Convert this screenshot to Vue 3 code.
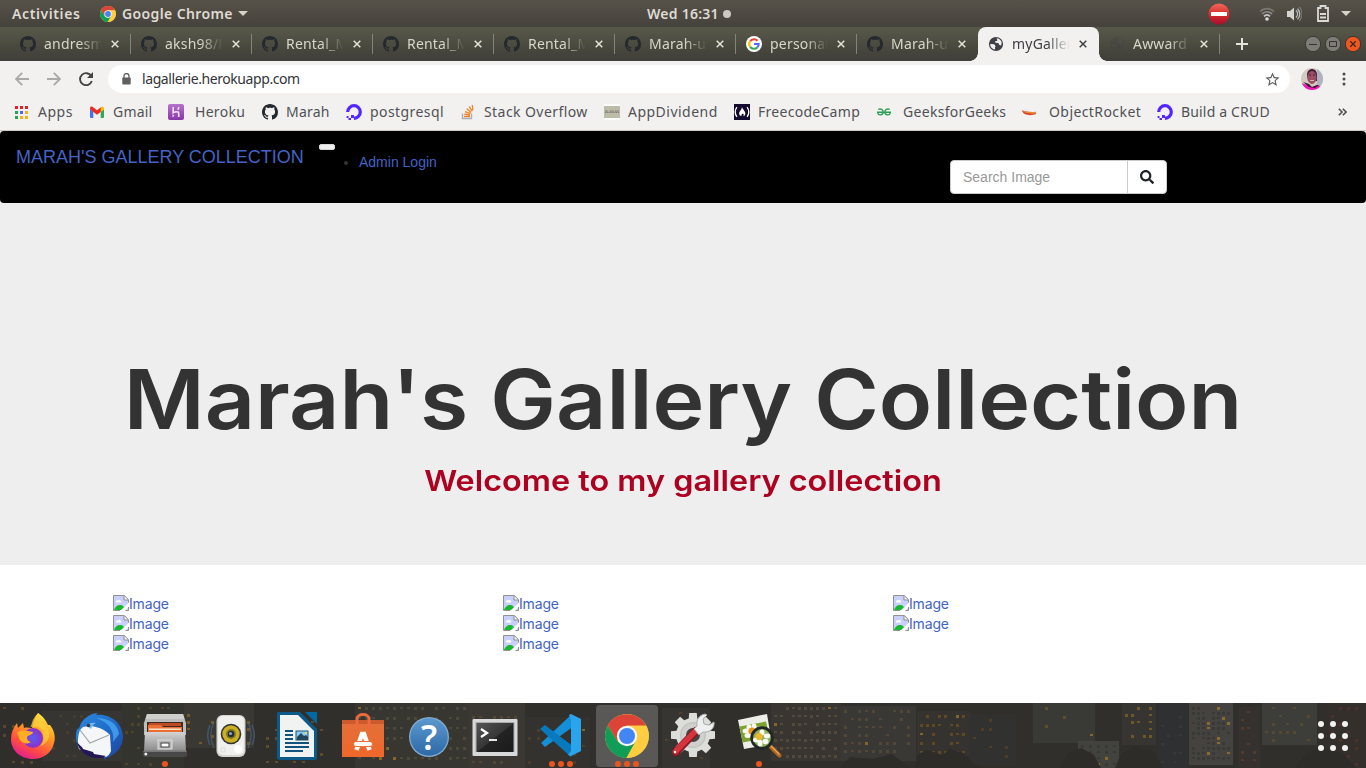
<script setup>
const tabs = [
  { icon: 'github', title: 'andresmoran' },
  { icon: 'github', title: 'aksh98/Rental' },
  { icon: 'github', title: 'Rental_Mgmt' },
  { icon: 'github', title: 'Rental_Mgmt' },
  { icon: 'github', title: 'Rental_Mgmt' },
  { icon: 'github', title: 'Marah-uwase' },
  { icon: 'google', title: 'personal gallery' },
  { icon: 'github', title: 'Marah-uwase' },
  { icon: 'globe', title: 'myGallery', active: true },
  { icon: 'globe', title: 'Awward', dim: true },
]
const bookmarks = [
  { icon: 'apps', label: 'Apps', cls: 'b-apps' },
  { icon: 'gmail', label: 'Gmail', cls: 'b-gmail' },
  { icon: 'heroku', label: 'Heroku', cls: 'b-heroku' },
  { icon: 'github', label: 'Marah', cls: 'b-marah' },
  { icon: 'ocean', label: 'postgresql', cls: 'b-pg' },
  { icon: 'stack', label: 'Stack Overflow', cls: 'b-so' },
  { icon: 'dividend', label: 'AppDividend', cls: 'b-ad' },
  { icon: 'fcc', label: 'FreecodeCamp', cls: 'b-fcc' },
  { icon: 'geeks', label: 'GeeksforGeeks', cls: 'b-gfg' },
  { icon: 'rocket', label: 'ObjectRocket', cls: 'b-or' },
  { icon: 'ocean', label: 'Build a CRUD', cls: 'b-crud' },
]
const columns = [3, 3, 2]
const dock = [
  { icon: 'firefox', dots: 0 },
  { icon: 'thunderbird', dots: 0 },
  { icon: 'files', dots: 1 },
  { icon: 'rhythmbox', dots: 0 },
  { icon: 'writer', dots: 0 },
  { icon: 'software', dots: 0 },
  { icon: 'help', dots: 0 },
  { icon: 'terminal', dots: 0 },
  { icon: 'vscode', dots: 3 },
  { icon: 'chrome', dots: 3, active: true },
  { icon: 'settings', dots: 0 },
  { icon: 'viewer', dots: 1 },
]

// Night skyline behind the dock: building blocks with rows of windows.
const blocks = [
  { x: 0, y: 0, w: 42, h: 65, f: '#302e2b', c: '#67512f', dx: 9, dy: 9, p: 0.35 },
  { x: 42, y: 8, w: 80, h: 50, f: '#363532', c: '#53452c', dx: 7, dy: 8, p: 0.35 },
  { x: 122, y: 0, w: 62, h: 65, f: '#34342f', c: '#5c4a2e', dx: 6, dy: 8, p: 0.3 },
  { x: 184, y: 0, w: 70, h: 45, f: '#3a3833', c: '#8c6729', dx: 6, dy: 7, p: 0.35 },
  { x: 254, y: 14, w: 76, h: 51, f: '#302f2c', c: '#735528', dx: 9, dy: 8, p: 0.3 },
  { x: 355, y: 0, w: 114, h: 65, f: '#383631', c: '#55503f', dx: 7, dy: 10, p: 0.8 },
  { x: 469, y: 0, w: 56, h: 65, f: '#3b3834', c: '#5c4d36', dx: 7, dy: 9, p: 0.4 },
  { x: 525, y: 14, w: 65, h: 51, f: '#34322e', c: '#594326', dx: 9, dy: 8, p: 0.25 },
  { x: 662, y: 5, w: 48, h: 60, f: '#373532', c: '#5d4727', dx: 7, dy: 9, p: 0.35 },
  { x: 771, y: 0, w: 70, h: 58, f: '#393631', c: '#5d5346', dx: 6, dy: 8, p: 0.75 },
  { x: 841, y: 3, w: 75, h: 55, f: '#3a3834', c: '#5a4e3c', dx: 7, dy: 8, p: 0.65 },
  { x: 917, y: 8, w: 53, h: 45, f: '#353330', c: '#75511f', dx: 6, dy: 9, p: 0.75 },
  { x: 970, y: 12, w: 46, h: 50, f: '#31312f', c: '#5b4220', dx: 8, dy: 9, p: 0.2 },
  { x: 1033, y: 0, w: 62, h: 40, f: '#393936', c: '#705528', dx: 9, dy: 9, p: 0.3 },
  { x: 1078, y: 38, w: 41, h: 27, f: '#42423e', c: '#343431', dx: 8, dy: 6, p: 0.9 },
  { x: 1122, y: 0, w: 34, h: 42, f: '#373531', c: '#896623', dx: 6, dy: 7, p: 0.6 },
  { x: 1158, y: 0, w: 30, h: 65, f: '#2f3031', c: '#3a3a3a', dx: 6, dy: 9, p: 0.3 },
  { x: 1189, y: 0, w: 44, h: 62, f: '#444340', c: '#343634', dx: 5, dy: 5, p: 0.7 },
  { x: 1238, y: 4, w: 22, h: 61, f: '#34312f', c: '#613e28', dx: 6, dy: 8, p: 0.4 },
  { x: 1262, y: 0, w: 55, h: 42, f: '#3d3d39', c: '#5f4f2f', dx: 7, dy: 8, p: 0.4 },
  { x: 1328, y: 0, w: 38, h: 65, f: '#352f2c', c: '#57362c', dx: 8, dy: 8, p: 0.35 },
]
let seed = 17
const rnd = () => (seed = (seed * 16807) % 2147483647) / 2147483647
const lights = blocks.flatMap((b) => {
  const out = []
  for (let y = b.y + 4; y < b.y + b.h - 3; y += b.dy)
    for (let x = b.x + 3; x < b.x + b.w - 3; x += b.dx)
      if (rnd() < b.p) out.push({ x, y, w: 3, h: rnd() > 0.4 ? 3 : 2, f: rnd() > 0.94 ? '#a47a2b' : b.c })
  return out
})
// Eight teeth around the settings gear.
const teeth = [0, 45, 90, 135, 180, 225, 270, 315]
</script>

<template>
  <div class="screen">
    <svg class="defs" aria-hidden="true">
      <defs>
        <linearGradient id="gFox" x1=".8" y1="0" x2=".3" y2="1"><stop offset="0" stop-color="#fff44f" /><stop offset=".4" stop-color="#ff9a1f" /><stop offset=".75" stop-color="#ff4a45" /><stop offset="1" stop-color="#e01d8f" /></linearGradient>
        <radialGradient id="gFoxIn"><stop offset="0" stop-color="#5b5cf0" /><stop offset="1" stop-color="#8f2fc8" /></radialGradient>
        <linearGradient id="gBird" x1="0" y1="0" x2="1" y2="1"><stop offset="0" stop-color="#2b8be0" /><stop offset=".5" stop-color="#1f6cc7" /><stop offset="1" stop-color="#1e3f9c" /></linearGradient>
        <linearGradient id="gMetal" x1="0" y1="0" x2="0" y2="1"><stop offset="0" stop-color="#d4d4d4" /><stop offset="1" stop-color="#8b8b8b" /></linearGradient>
        <linearGradient id="gOrange" x1="0" y1="0" x2="0" y2="1"><stop offset="0" stop-color="#e2703a" /><stop offset="1" stop-color="#f0672a" /></linearGradient>
        <linearGradient id="gHelp" x1="0" y1="0" x2="0" y2="1"><stop offset="0" stop-color="#5c98cf" /><stop offset="1" stop-color="#2c69a6" /></linearGradient>
        <linearGradient id="gTerm" x1="0" y1="0" x2="1" y2="1"><stop offset="0" stop-color="#555" /><stop offset=".5" stop-color="#363636" /><stop offset=".51" stop-color="#232323" /><stop offset="1" stop-color="#1b1b1b" /></linearGradient>
        <linearGradient id="gStop" x1="0" y1="0" x2="0" y2="1"><stop offset="0" stop-color="#ef6a5a" /><stop offset=".5" stop-color="#d92c2c" /><stop offset="1" stop-color="#a80f2c" /></linearGradient>
        <linearGradient id="gHer" x1="0" y1="0" x2="0" y2="1"><stop offset="0" stop-color="#b572cf" /><stop offset="1" stop-color="#8a35a8" /></linearGradient>
      </defs>
      <symbol id="i-github" viewBox="0 0 16 16"><path fill="#24292e" d="M8 0C3.58 0 0 3.58 0 8c0 3.54 2.29 6.53 5.47 7.59.4.07.55-.17.55-.38 0-.19-.01-.82-.01-1.49-2.01.37-2.53-.49-2.69-.94-.09-.23-.48-.94-.82-1.13-.28-.15-.68-.52-.01-.53.63-.01 1.08.58 1.23.82.72 1.21 1.87.87 2.33.66.07-.52.28-.87.51-1.07-1.78-.2-3.64-.89-3.64-3.95 0-.87.31-1.59.82-2.15-.08-.2-.36-1.02.08-2.12 0 0 .67-.21 2.2.82.64-.18 1.32-.27 2-.27s1.36.09 2 .27c1.53-1.04 2.2-.82 2.2-.82.44 1.1.16 1.92.08 2.12.51.56.82 1.27.82 2.15 0 3.07-1.87 3.75-3.65 3.95.29.25.54.73.54 1.48 0 1.07-.01 1.93-.01 2.2 0 .21.15.46.55.38A8.01 8.01 0 0 0 16 8c0-4.42-3.58-8-8-8z" /></symbol>
      <symbol id="i-google" viewBox="0 0 16 16"><circle cx="8" cy="8" r="8" fill="#fff" /><g fill="none" stroke-width="2.1"><path d="M4.2 5.2A4.7 4.7 0 0 1 11.5 4.8" stroke="#ea4335" /><path d="M4.2 10.8A4.7 4.7 0 0 1 4.2 5.2" stroke="#fbbc05" /><path d="M11.2 11.5A4.7 4.7 0 0 1 4.2 10.8" stroke="#34a853" /><path d="M8 8H12.7A4.7 4.7 0 0 1 11.2 11.5" stroke="#4f6df5" /></g></symbol>
      <symbol id="i-globe" viewBox="0 0 16 16"><path fill="#3f4145" fill-rule="evenodd" d="M8 .9a7.100 7.100 0 1 1 0 14.200A7.100 7.100 0 0 1 8 .9zM2.200 8.100l4 .1 1.500 2.300-.7.5v2.600C4.300 13.200 2.100 11 2.200 8.100zM8.600 2.300c2.300.1 4.500 1.800 5.100 4.100l-.6 3.100-1.700-.5-1.100-2-2.900-.3-.2-1.600 1.900-.2.200-1z" /></symbol>
      <symbol id="i-apps" viewBox="0 0 16 16"><path fill="#e8202a" d="M1 2h3v3H1zM6 2h3v3H6zM11 2h3v3h-3z" /><path fill="#23a455" d="M1 7h3v3H1zM1 12h3v3H1z" /><path fill="#5364ec" d="M6 7h3v3H6z" /><path fill="#efb21b" d="M11 7h3v3h-3zM6 12h3v3H6zM11 12h3v3h-3z" /></symbol>
      <symbol id="i-gmail" viewBox="0 0 16 16"><path fill="#4772ed" d="M1 5l3.300 2.500V14H2a1 1 0 0 1-1-1z" /><path fill="#31a853" d="M11.700 7.500L15 5v8a1 1 0 0 1-1 1h-2.300z" /><path fill="#ea2c27" d="M1 4c0-1.500 1.400-2 2.500-1.200L8 6.200l4.300-3.300v4.500L8 10.700 3.500 7.200 1 5.300z" /><path fill="#fbbc04" d="M11.700 3.300c1.400-1.200 3.300-.6 3.300 1.200v1L11.700 8z" /></symbol>
      <symbol id="i-heroku" viewBox="0 0 16 16"><rect width="16" height="16" rx="2" fill="url(#gHer)" /><path d="M5.200 3v5.800c2.300-1.500 5.500-1.600 5.500.4V13M10.800 3c0 1.100-.4 2-1.100 2.700" fill="none" stroke="#f3e5f8" stroke-width="1.600" /><path d="M4.500 10.200l2 1.600-2 1.600z" fill="#f3e5f8" /></symbol>
      <symbol id="i-ocean" viewBox="0 0 16 16"><path d="M1.700 8A6.300 6.300 0 1 1 8 14.300" fill="none" stroke="#5326ff" stroke-width="3.200" /><path fill="#5326ff" d="M5 11h3v4.800h-.1V14H5zM2.500 14H5v2H2.500zM.6 12h1.900v2H.6z" /></symbol>
      <symbol id="i-stack" viewBox="0 0 16 16"><path d="M2.500 9.500v5h9v-5" fill="none" stroke="#a8b1bb" stroke-width="1.400" /><path d="M4 12.500h6M4.200 10.200l5.800.8M5.100 7.600l5.200 2.100M6.800 4.800l4.200 3.600M9.200 2.500l2.800 4.700M12.300 1l.6 5.400" fill="none" stroke="#f48024" stroke-width="1.300" /></symbol>
      <symbol id="i-dividend" viewBox="0 0 16 16"><path d="M0 0h16v16H0z" fill="#fbfbf9" /><path d="M0 2h16v12H0z" fill="#bdbba9" /><path d="M1 8.300h14M1.500 7h2.500M6 7h4M11 7h4" stroke="#6c6a5e" stroke-width=".9" stroke-dasharray="1.500 .6" fill="none" /></symbol>
      <symbol id="i-fcc" viewBox="0 0 16 16"><path d="M0 0h16v16H0z" fill="#150a30" /><path d="M2.900 3.200C.9 6 .9 10 2.900 12.800M13.100 3.200c2 2.800 2 6.800 0 9.600" fill="none" stroke="#fff" stroke-width="1.300" /><path d="M8 3c.6 2.400 3.800 4.400 3.300 7-.2 1.200-1 2-2 2.300.6-.9.6-2-.3-2.700-.3.500-.8.5-1 .1-.3 1-1 1.200-.4 2.600-1.500-.4-2.600-1.500-2.500-3C5.300 7 7.700 6 8 3z" fill="#fff" /></symbol>
      <symbol id="i-geeks" viewBox="0 0 16 16"><path d="M1 8.300h14M2.300 5.400c2.300-1.200 5.100.1 4.800 3-.3 3-4.700 3.400-5.400.4M13.700 5.400c-2.300-1.200-5.100.1-4.800 3 .3 3 4.700 3.400 5.400.4" fill="none" stroke="#2f9f58" stroke-width="1.400" /></symbol>
      <symbol id="i-rocket" viewBox="0 0 16 16"><path d="M1 6.300c3 1.700 10 2 14 1.500v2.300c-4 1.800-13 2-14-3.800z" fill="#d8432a" /><path d="M1.500 6.500c3 1.900 9 2.200 13.500 1.500v1.200c-4 .6-11 .4-13.500-2.700z" fill="#f0a03c" /></symbol>
      <symbol id="i-chrome" viewBox="0 0 44 44"><circle cx="22" cy="22" r="22" fill="#f9c938" /><path d="M2.700 11.500A22 22 0 0 1 41.200 11.500H22L12.500 27.500z" fill="#db4437" /><path d="M2.700 11.500A22 22 0 0 0 21.500 44l9.600-16.800L22 32l-9.500-4.500z" fill="#0f9d58" /><path d="M22 12h19.200A22 22 0 0 1 21.500 44l9.200-17z" fill="#ffcd40" /><circle cx="22" cy="22" r="10.200" fill="#f7f7f7" /><circle cx="22" cy="22" r="8" fill="#4285f4" /></symbol>
      <symbol id="i-firefox" viewBox="0 0 48 48"><path d="M29 1c6 4 8 8 10 12l2 0c4 5 6 12 4 18-2 10-11 16-21 16C11 47 2 38 2 27c0-6 2-11 6-16l1 5 5-5 1 5c3-1 5 0 8 0 2-7 3-11 6-15z" fill="url(#gFox)" /><circle cx="24" cy="26" r="10" fill="url(#gFoxIn)" /><path d="M8 21c4-4 9-2 16-1 0 3-5 3-6 5 0 3 1 4 4 5-6 4-12-1-12-5z" fill="#ffad24" /><path d="M22 15c6-1 11 1 13 5l-2-1c3 6 2 11-2 15 8-2 12-11 7-19-4-4-9-7-8-14-5 3-7 8-8 14z" fill="#ffcd3e" opacity=".75" /></symbol>
      <symbol id="i-thunderbird" viewBox="0 0 48 48"><path d="M12 5C16 2 19 1 23 1c-1 1-2 1-2 2 13-2 26 7 27 21 0 11-7 19-17 22l-2 2v-4L8 40C2 36-1 26 2 17c2 0 2-1 3-3 1-4 3-6 7-9z" fill="url(#gBird)" /><path d="M5 18l3-3c9-2 19 0 27 8l1 16c-1 3-3 5-5 6-8 0-19-3-27-8C2 31 3 23 5 18z" fill="#f5f6f7" /><path d="M5 18l10 13 19-8" fill="none" stroke="#9fa5ab" stroke-width="1.200" /><path d="M21 6c12 4 19 12 17 24l6-8C43 12 34 6 21 6z" fill="#47a5f3" opacity=".8" /><path d="M12 14c2-3 5-4 9-3-3 1-4 4-5 6z" fill="#6fb9ef" /><circle cx="13.500" cy="13.500" r="1.800" fill="#3a3540" /><path d="M2 30c3 4 6 5 6 7l10 3 1 2 12 2-4 2C13 47 4 40 2 30z" fill="#251657" /></symbol>
      <symbol id="i-files" viewBox="0 0 48 48"><path d="M6 2h36l3 9v12H3V11z" fill="#bdbdbb" /><path d="M6 2h36l1.500 5h-39z" fill="#cfcfcd" /><path d="M6 10h36v10H6z" fill="#3e2a20" /><path d="M8 11h32v3H8z" fill="#bd4b24" /><path d="M7 13h13l2 2h19v5H7z" fill="#e96f35" /><path d="M8 16.500h32v1.500H8z" fill="#fde2c6" /><path d="M4 20h40l1 19H3z" fill="url(#gMetal)" /><path d="M2 40h44v3a2 2 0 0 1-2 2H4a2 2 0 0 1-2-2z" fill="#474747" /><path d="M3 38.500h42l1 1.500H2z" fill="#777" /><rect x="17" y="28" width="14" height="9" fill="#b7b7b7" stroke="#ddd" /><rect x="20" y="31" width="8" height="4" fill="#fff" stroke="#404040" /><circle cx="4.800" cy="42" r="1.500" fill="#eee" /></symbol>
      <symbol id="i-rhythmbox" viewBox="0 0 48 48"><path d="M7 10C3 18 3 28 7 36M3 13c-3 7-3 14 0 20M41 10c4 8 4 18 0 26M45 13c3 7 3 14 0 20" fill="none" stroke="#466482" stroke-opacity=".7" stroke-width="1.500" /><rect x="9.500" y="3" width="29" height="42" rx="6" fill="#d5d5d2" /><rect x="11" y="4" width="26" height="39" rx="5" fill="#f0f0ee" /><circle cx="24" cy="22" r="10.300" fill="#333" /><circle cx="24" cy="22" r="8.700" fill="#cbb024" /><circle cx="24" cy="22" r="5" fill="#847822" /><circle cx="24" cy="22" r="3.200" fill="#252b35" /><circle cx="23.500" cy="21.500" r="1.600" fill="#91a4b7" /><circle cx="31" cy="37" r="4" fill="#fff" /><path d="M14 36h4v4h-4z" fill="none" stroke="#ddd" /></symbol>
      <symbol id="i-writer" viewBox="0 0 48 48"><path d="M5 0h22l17 17v29a2 2 0 0 1-2 2H7a3 3 0 0 1-3-3V2a2 2 0 0 1 1-2z" fill="#0b5a89" /><path d="M7 3h18l16 16v26H7z" fill="#f1f2f2" /><path d="M32 0h12v12z" fill="#0369a3" /><path d="M12 19h8M12 23h8M12 27h8M12 31h24M12 35h24M12 39h18" stroke="#11537c" stroke-width="2" /><rect x="23" y="19" width="12" height="9" fill="#8ccaf0" stroke="#17577b" /><path d="M24 28v-3l4-4 3 3 2-1 2 2v3z" fill="#24465a" /><circle cx="33" cy="21" r="1" fill="#ffe05a" /></symbol>
      <symbol id="i-software" viewBox="0 0 48 48"><path d="M3 9h42v36H3z" fill="url(#gOrange)" /><path d="M3 8h42v4H3z" fill="#c95b2e" /><path d="M18 16V7c0-6 12-6 12 0v9" fill="none" stroke="#ee693c" stroke-width="3" /><path d="M17.500 38L23 22h2l5.500 16" fill="none" stroke="#fff" stroke-width="4.500" /><rect x="14.500" y="29.500" width="19" height="5" rx="2.500" fill="#fff" stroke="#ed7138" stroke-width="1" /></symbol>
      <symbol id="i-help" viewBox="0 0 48 48"><circle cx="24" cy="25" r="20" fill="#82abd0" /><circle cx="24" cy="25" r="18.700" fill="url(#gHelp)" /></symbol>
      <symbol id="i-terminal" viewBox="0 0 48 48"><rect x="1.500" y="7" width="45" height="37" rx="1" fill="#d7d8d9" /><rect x="4.500" y="10" width="39" height="30" fill="#aaa" /><rect x="5.500" y="11" width="37" height="29" fill="url(#gTerm)" /><path d="M10 17l6 4-6 4" fill="none" stroke="#fff" stroke-width="2.300" /><path d="M18 28h8" stroke="#fff" stroke-width="1.800" /></symbol>
      <symbol id="i-vscode" viewBox="0 0 48 48"><path d="M34 3L4 31l4 4 29-21z" fill="#148ed5" /><path d="M8 13l29 22-3 10L3 17z" fill="#0879bd" /><path d="M32 3l2-1 10 5v32l-10 5-3-1 3-4V8z" fill="#2aa4ed" /></symbol>
      <symbol id="i-settings" viewBox="0 0 48 48"><g fill="#dddeda"><path v-for="a in teeth" :key="a" d="M19.500 9l.7-8h7.600l.7 8z" :transform="'rotate(' + a + ' 24 23)'" /><circle cx="24" cy="23" r="17" /></g><circle cx="24" cy="23" r="13" fill="#c3c5c2" /><circle cx="24" cy="23" r="11.500" fill="#d0d1ce" /><circle cx="24" cy="23" r="7" fill="#454440" /><path d="M7 40L27 19" stroke="#8c1724" stroke-width="8" stroke-linecap="round" /><path d="M6.500 39.500L27 18.500" stroke="#d5343d" stroke-width="5.500" stroke-linecap="round" /><path d="M25 17l3-3c-1-6 2-11 8-12l2 1-4 4 1 5 5 1 5-3c1 6-4 11-11 10l-4 3z" fill="#eef0ef" stroke="#a9acab" /><circle cx="6" cy="40" r="1.200" fill="#fff" /></symbol>
      <symbol id="i-viewer" viewBox="0 0 48 48"><path d="M3 8l29-6 5 30-28 5z" fill="#eeeee8" /><path d="M4.500 14.500l26.500-5 3.500 16-27 5z" fill="#7da232" /><g fill="#fbfbf2"><ellipse cx="11" cy="19" rx="3.500" ry="2.500" /><ellipse cx="14" cy="15.500" rx="2.500" ry="3" /><ellipse cx="19" cy="14.500" rx="2.500" ry="3" /><ellipse cx="13" cy="23.500" rx="3.500" ry="2.500" /><ellipse cx="24" cy="17" rx="3.500" ry="2.500" /></g><circle cx="17" cy="19" r="3.600" fill="#e5941d" /><path d="M35.500 34.500l9 9" stroke="#ae6723" stroke-width="4" stroke-linecap="round" /><path d="M36 34l8 8" stroke="#eba64e" stroke-width="1.300" stroke-linecap="round" /><circle cx="27" cy="26" r="10.300" fill="#8fae5c" stroke="#202726" stroke-width="2.800" /><g fill="#fbfbf2"><ellipse cx="21" cy="28" rx="3" ry="2.500" /><ellipse cx="25" cy="31" rx="2.500" ry="3.500" /><ellipse cx="30.500" cy="29.500" rx="3" ry="2.700" /><ellipse cx="32" cy="24" rx="3.200" ry="2.400" /><ellipse cx="27" cy="20.500" rx="2.500" ry="3" /></g><circle cx="24" cy="24.500" r="3.500" fill="#efb62d" /></symbol>
      <symbol id="i-broken" viewBox="0 0 16 16"><path d="M.5.5h10.800l4.200 4.200v10.800H.5z" fill="#c8d0fb" /><path d="M3 7.500c-.6-2 1.200-2.800 2-2 .8-1.500 3-.8 2.700.7 1 .1.900 1.300 0 1.300z" fill="#fff" /><path d="M1 15c1-3.500 4-5.500 7-5 2 .4 3.500 2.500 4.500 5z" fill="#17b82e" /><path d="M6.500 16.500L16.500 7v4l-5 5.500z" fill="#fff" /><path d="M11 1v4h4" fill="#fff" stroke="#8b8b8b" /><path d="M15.500 4.700v3M15.500 12v3.500h-3M7 15.500H.5V.5h10.800l4.200 4.200" fill="none" stroke="#929292" /></symbol>
    </svg>

    <header class="topbar">
      <span class="activities">Activities</span>
      <svg class="top-chrome"><use href="#i-chrome" /></svg>
      <span class="app-name">Google Chrome</span>
      <i class="caret"></i>
      <span class="clock">Wed 16:31</span><i class="notice"></i>
      <div class="tray">
        <svg width="22" height="22" viewBox="0 0 22 22"><circle cx="11" cy="11" r="10.500" fill="url(#gStop)" /><path d="M3 9h16v4H3z" fill="#fff" /></svg>
        <svg class="wifi" width="16" height="16" viewBox="0 0 16 16"><g fill="none" stroke-width="1.700"><path d="M1 5.600c4-4 10-4 14 0" stroke="#77756e" /><path d="M3 8c3-3 7-3 10 0" stroke="#8f8d88" /><path d="M5 10.400c2-2 4-2 6 0" stroke="#ccc" /></g><circle cx="8" cy="13" r="1.800" fill="#ddd" /></svg>
        <svg class="vol" width="16" height="16" viewBox="0 0 16 16"><path d="M1 5h3l4-3.500v13L4 11H1z" fill="#d5d4d0" /><path d="M10 4.500c2 2 2 5 0 7M11.500 2.700c3 3 3 7.600 0 10.600" fill="none" stroke="#bbb" stroke-width="1.300" /><path d="M13.200 1c3.600 4 3.600 10 0 14" fill="none" stroke="#77756e" stroke-width="1.300" /></svg>
        <svg class="bat" width="14" height="17" viewBox="0 0 14 17"><path d="M2 3h2.500V1h5v2H12v13H2z" fill="none" stroke="#dad9d4" stroke-width="1.800" /><path d="M4 9h6M4 12.500h6" stroke="#dad9d4" stroke-width="2" /></svg>
        <i class="caret"></i>
      </div>
    </header>

    <div class="tabstrip">
      <div v-for="(t, i) in tabs" :key="i" class="tab" :class="{ active: t.active, dim: t.dim, nosep: i === 7 }">
        <svg class="fav"><use :href="'#i-' + t.icon" /></svg>
        <span class="title">{{ t.title }}</span>
        <svg class="close" viewBox="0 0 8 8"><path d="M.7.7l6.600 6.600M7.300.7L.7 7.300" /></svg>
      </div>
      <svg class="plus" viewBox="0 0 12 12"><path d="M6 0v12M0 6h12" stroke="#e4e3dc" stroke-width="2" /></svg>
      <div class="winbtns">
        <svg viewBox="0 0 16 16"><circle cx="8" cy="8" r="7.700" fill="#7d7c76" stroke="#383832" /><path d="M4 8.500h8" stroke="#33332f" /></svg>
        <svg viewBox="0 0 16 16"><circle cx="8" cy="8" r="7.700" fill="#7d7c76" stroke="#383832" /><path d="M4.500 5.500h7v5h-7z" fill="none" stroke="#33332f" /></svg>
        <svg viewBox="0 0 16 16"><circle cx="8" cy="8" r="7.700" fill="#ee5721" stroke="#3b332d" /><path d="M5.300 5.300l5.400 5.400M10.700 5.300l-5.400 5.400" stroke="#3b2b20" stroke-width="1.300" /></svg>
      </div>
    </div>

    <div class="toolbar">
      <svg class="nav" viewBox="0 0 14 14"><path d="M14 7H1.200M7.200 .8L1 7l6.200 6.200" /></svg>
      <svg class="nav fwd" viewBox="0 0 14 14"><path d="M0 7h12.800M6.800 .8L13 7l-6.200 6.200" /></svg>
      <svg class="nav reload" viewBox="0 0 14 14"><path d="M12.300 4.200A6 6 0 1 0 12.800 9" /><path class="solid" d="M14 0v6H8z" /></svg>
      <div class="omnibox">
        <svg class="lock" viewBox="0 0 9 12"><path d="M2 5V3a2.500 2.500 0 0 1 5 0v2" fill="none" stroke="#5f5f5f" stroke-width="1.300" /><rect x=".3" y="4.500" width="8.400" height="7" rx=".8" fill="#5f5f5f" /></svg>
        <span class="url">lagallerie.herokuapp.com</span>
        <svg class="star" viewBox="0 0 24 24"><path fill="#5f5f5f" d="M22 9.200l-7.200-.6L12 2 9.200 8.600 2 9.200l5.500 4.700L5.800 21 12 17.300 18.200 21l-1.600-7.100zM12 15.400l-3.800 2.300 1-4.300-3.300-2.900 4.400-.4L12 6.100l1.700 4 4.400.4-3.300 2.900 1 4.300z" /></svg>
      </div>
      <svg class="avatar" viewBox="0 0 22 22"><clipPath id="av"><circle cx="11" cy="11" r="11" /></clipPath><g clip-path="url(#av)"><path fill="#d4cbc0" d="M0 0h22v22H0z" /><path fill="#aeb3bf" d="M16 0h6v22h-6z" /><path d="M6 7c0-8 10-8 10 0v6H7z" fill="#45203b" /><ellipse cx="11" cy="9.500" rx="4.500" ry="6.500" fill="#9a4f65" /><path d="M8 7h2M12 7h2" stroke="#45203b" /><path d="M9 12.500h4" stroke="#d9b3b5" /><path d="M0 15l6 2 5 2 6-2 5 3v3H0z" fill="#ed18b4" /><path d="M2 14l6 2 3 3 5-2 2 0-4 3-6-1z" fill="#38172d" /></g></svg>
      <svg class="more" viewBox="0 0 4 14"><g fill="#4c4c4c"><circle cx="2" cy="2" r="1.500" /><circle cx="2" cy="7" r="1.500" /><circle cx="2" cy="12" r="1.500" /></g></svg>
    </div>

    <div class="bookmarks">
      <div v-for="b in bookmarks" :key="b.cls" class="bm" :class="b.cls">
        <svg class="bm-icon"><use :href="'#i-' + b.icon" /></svg><span>{{ b.label }}</span>
      </div>
      <svg class="chev" viewBox="0 0 9 8"><path d="M.8.800L4 4 .8 7.200M4.800.800L8 4 4.800 7.200" /></svg>
    </div>

    <main class="page">
      <nav class="navbar">
        <a class="brand">MARAH'S GALLERY COLLECTION</a>
        <span class="toggler"></span>
        <ul><li><a>Admin Login</a></li></ul>
        <div class="search">
          <span class="field">Search Image</span>
          <span class="go"><svg viewBox="0 0 512 512"><path d="M505 442.700L405.300 343c-4.500-4.500-10.600-7-17-7H372c27.600-35.300 44-79.700 44-128C416 93.100 322.900 0 208 0S0 93.100 0 208s93.100 208 208 208c48.300 0 92.700-16.400 128-44v16.300c0 6.400 2.500 12.500 7 17l99.700 99.700c9.400 9.400 24.600 9.400 33.900 0l28.300-28.300c9.400-9.400 9.400-24.600.1-34zM208 336c-70.700 0-128-57.200-128-128 0-70.700 57.200-128 128-128 70.700 0 128 57.200 128 128 0 70.700-57.200 128-128 128z" /></svg></span>
        </div>
      </nav>
      <section class="hero">
        <h1>Marah's Gallery Collection</h1>
        <p>Welcome to my gallery collection</p>
      </section>
      <section class="gallery">
        <div v-for="(n, c) in columns" :key="c" class="col">
          <a v-for="k in n" :key="k" class="pic"><svg><use href="#i-broken" /></svg><span>Image</span></a>
        </div>
      </section>
    </main>

    <footer class="dock">
      <svg class="city" viewBox="0 0 1366 65" preserveAspectRatio="none">
        <rect v-for="(b, i) in blocks" :key="'b' + i" :x="b.x" :y="b.y" :width="b.w" :height="b.h" :fill="b.f" />
        <rect v-for="(l, i) in lights" :key="'l' + i" :x="l.x" :y="l.y" :width="l.w" :height="l.h" :fill="l.f" opacity=".7" />
        <path d="M915 65l3-14 10-4 14 5 8-6 13 4 12 12 9 3M1060 65l7-14 14-6 13 7 7 13zM1115 65l6-14 14-8 18 5 10 17zM1295 65l12-15 15-5 20 5 14 15zM840 65l10-11 22 2 20-5 18 14z" fill="#2d2c29" />
      </svg>
      <div v-for="d in dock" :key="d.icon" class="app" :class="{ running: d.active }">
        <svg class="app-icon" :class="d.icon"><use :href="'#i-' + d.icon" /></svg>
        <span v-if="d.icon === 'help'" class="help-mark">?</span>
        <span class="dots"><i v-for="k in d.dots" :key="k"></i></span>
      </div>
      <div class="launcher"><i v-for="k in 9" :key="k"></i></div>
    </footer>
  </div>
</template>

<style>
body { margin: 0; overflow: hidden; }
</style>

<style scoped>
* { box-sizing: border-box; }
.screen { width: 1366px; height: 768px; display: flex; flex-direction: column; overflow: hidden; background: #fff; font-family: "Noto Sans", "Open Sans", sans-serif; }
.defs { position: absolute; width: 0; height: 0; }
svg { display: block; flex: none; }

.topbar { height: 27px; flex: none; display: flex; align-items: center; padding-left: 12px; background: linear-gradient(#575249, #45423c); color: #dfdbd2; font-size: 14px; font-weight: 600; position: relative; white-space: nowrap; }
.activities { width: 88px; letter-spacing: .600px; }
.top-chrome { width: 16px; height: 16px; margin-right: 6px; }
.app-name { width: 116px; letter-spacing: .380px; }
.caret { width: 0; height: 0; border: 5px solid transparent; border-top-color: #d5d2ca; border-bottom: 0; }
.clock { margin-left: 399px; width: 76px; letter-spacing: .250px; }
.notice { width: 8px; height: 8px; border-radius: 50%; background: #ccc9c3; }
.tray { margin-left: auto; width: 158px; display: flex; align-items: center; }
.wifi { margin-left: 29px; }
.vol { margin-left: 11px; }
.bat { margin-left: 14px; }
.tray .caret { margin-left: 11px; }

.tabstrip { height: 34px; flex: none; display: flex; padding-left: 10px; background: linear-gradient(#585849, #3f3e38); }
.tab { width: 121px; height: 34px; display: flex; align-items: center; padding-left: 10px; position: relative; color: #d9d7cb; font-size: 14px; }
.tab::after { content: ""; position: absolute; right: 0; top: 7px; width: 1px; height: 20px; background: #85847a; }
.tab.active::after, .tab.nosep::after { display: none; }
.fav { width: 16px; height: 16px; margin-right: 8px; }
.dim .fav { opacity: .3; }
.title { width: 59px; overflow: hidden; white-space: nowrap; line-height: 24px; letter-spacing: .200px; -webkit-mask-image: linear-gradient(90deg, #000 60%, transparent 98%); mask-image: linear-gradient(90deg, #000 60%, transparent 98%); }
.close { width: 8px; height: 8px; margin-left: 8px; }
.close path { stroke: #e4e3d9; stroke-width: 1.500; }
.tab.active { background: #f2f1f0; border-radius: 8px 8px 0 0; color: #3f4044; }
.active .close path { stroke: #3f4044; }
.active::before { content: ""; position: absolute; left: -8px; bottom: 0; width: 137px; height: 8px; background: radial-gradient(circle at 0 0, transparent 7.500px, #f2f1f0 8px) left / 8px 8px no-repeat, radial-gradient(circle at 100% 0, transparent 7.500px, #f2f1f0 8px) right / 8px 8px no-repeat; }
.plus { width: 12px; height: 12px; margin: 11px 0 0 16px; }
.winbtns { display: flex; gap: 4px; margin: 9px 0 0 auto; padding-right: 5px; }
.winbtns svg { width: 16px; height: 16px; }

.toolbar { height: 36px; flex: none; background: #f2f1f0; display: flex; align-items: center; padding-left: 15px; }
.nav { width: 14px; height: 14px; fill: none; stroke: #aaa9a8; stroke-width: 1.900; }
.fwd { margin-left: 18px; }
.reload { margin-left: 18px; stroke: #444; }
.solid { fill: #444; stroke: none; }
.omnibox { margin-left: 15px; width: 1182px; height: 28px; border-radius: 14px; background: #fff; display: flex; align-items: center; padding-left: 14px; }
.lock { width: 9px; height: 12px; }
.url { margin-left: 11px; font-size: 14px; line-height: 24px; color: #33343a; letter-spacing: -.420px; }
.star { width: 17px; height: 17px; margin-left: auto; margin-right: 9px; }
.avatar { width: 22px; height: 22px; margin-left: 11px; }
.more { width: 4px; height: 14px; margin-left: 19px; }

.bookmarks { height: 34px; flex: none; background: #f2f1f0; border-bottom: 1px solid #c9c8c7; display: flex; align-items: center; padding: 0 0 3px 14px; position: relative; }
.bm { display: flex; align-items: center; font-size: 14px; line-height: 22px; color: #505154; white-space: nowrap; }
.bm-icon { width: 16px; height: 16px; margin-right: 8px; }
.b-apps { width: 75px; letter-spacing: .500px; } .b-gmail { width: 79px; letter-spacing: .200px; } .b-heroku { width: 94px; letter-spacing: .300px; } .b-marah { width: 84px; letter-spacing: .200px; }
.b-pg { width: 114px; letter-spacing: .430px; } .b-so { width: 144px; letter-spacing: .430px; } .b-ad { width: 130px; letter-spacing: .480px; } .b-fcc { width: 142px; letter-spacing: .280px; }
.b-gfg { width: 145px; letter-spacing: .300px; } .b-or { width: 136px; letter-spacing: .420px; } .b-crud { width: 140px; letter-spacing: .170px; }
.b-heroku .bm-icon, .b-gfg .bm-icon { margin-right: 11px; }
.b-or .bm-icon { margin-right: 12px; }
.chev { width: 9px; height: 8px; margin-left: 41px; fill: none; stroke: #505154; stroke-width: 1.600; }

.page { flex: 1; min-height: 0; display: flex; flex-direction: column; background: #eee; }
.navbar { height: 72px; flex: none; background: #000; border-radius: 4px; display: flex; padding-left: 16px; font-family: "Liberation Sans", Arial, sans-serif; color: #4463c4; }
.brand { width: 303px; margin-top: 16px; font-size: 18px; line-height: 20px; white-space: nowrap; }
.toggler { width: 16px; height: 6px; margin-top: 13px; background: #efefef; border: 1px solid #d8d8d8; border-radius: 2px; }
ul { margin: 21px 0 0; padding: 0 0 0 24px; width: 615px; font-size: 14px; line-height: 20px; }
li::marker { color: #333; }
.search { display: flex; margin-top: 29px; width: 217px; height: 34px; background: #fff; border: 1px solid #ccc; border-radius: 4px; }
.field { width: 177px; border-right: 1px solid #ccc; padding-left: 12px; font-size: 14px; line-height: 32px; color: #999; }
.go { flex: 1; display: flex; align-items: center; justify-content: center; }
.go svg { width: 14px; height: 14px; fill: #212529; }

.hero { height: 362px; flex: none; text-align: center; padding-top: 141px; }
h1 { margin: 0; font: 600 82px/112px Inter, sans-serif; color: #333; white-space: nowrap; transform: scaleX(1.070); }
.hero p { margin: 8px 0 0; font: 600 29px/34px Inter, sans-serif; color: #ac0121; white-space: nowrap; transform: scaleX(1.117); }

.gallery { flex: 1; background: #fff; display: flex; padding: 29px 0 0 113px; }
.col { width: 390px; }
.pic { display: flex; align-items: center; height: 20px; color: #4463c4; font: 14px/20px Inter, sans-serif; letter-spacing: -.150px; }
.pic svg { width: 16px; height: 16px; margin-bottom: 2px; }

.dock { height: 65px; flex: none; background: #302f2c; display: flex; position: relative; }
.city { position: absolute; left: 0; top: 0; width: 1366px; height: 65px; }
.app { width: 66px; height: 65px; display: flex; flex-direction: column; align-items: center; position: relative; padding-top: 9px; }
.running::before { content: ""; position: absolute; left: 2px; top: 2px; width: 62px; height: 62px; border-radius: 4px; background: rgba(255, 255, 255, .2); }
.app-icon { width: 48px; height: 48px; position: relative; }
.app-icon.chrome { width: 44px; height: 44px; margin: 2px 0; }
.help-mark { position: absolute; left: 13px; top: 14px; width: 40px; text-align: center; font: 600 35px/40px "Noto Sans", sans-serif; color: #fff; }
.dots { display: flex; gap: 3px; height: 6px; margin-top: 1px; position: relative; }
.dots i { width: 6px; height: 6px; border-radius: 50%; background: #e95420; }
.launcher { position: relative; margin-left: auto; margin-right: 18px; padding-top: 18px; display: grid; grid-template-columns: repeat(3, 6px); grid-auto-rows: 6px; gap: 6px; }
.launcher i { border-radius: 50%; background: #f2f2f0; }
</style>
